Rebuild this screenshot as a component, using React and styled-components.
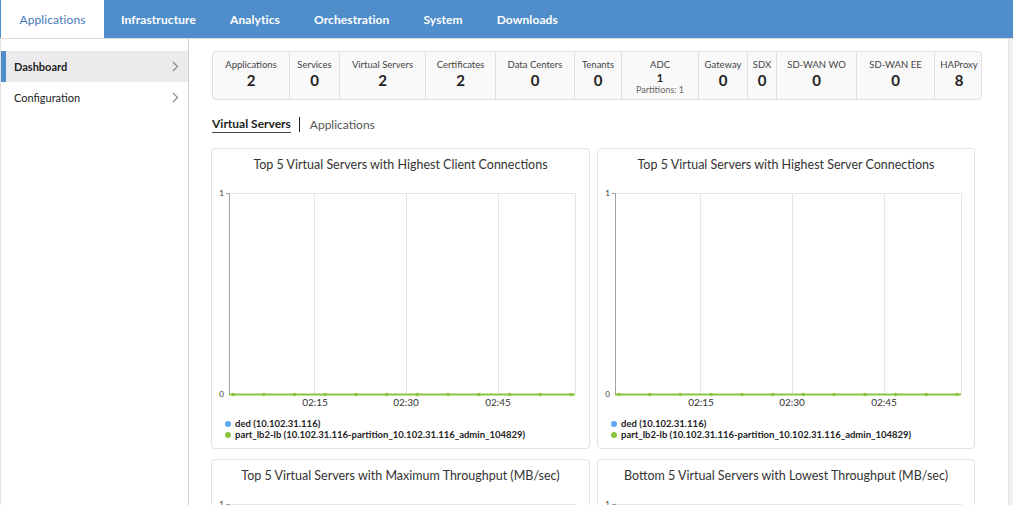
import React from "react";
import styled, { createGlobalStyle } from "styled-components";

const GlobalStyle = createGlobalStyle`
  html, body {
    margin: 0;
    padding: 0;
    overflow: hidden;
    background: #fff;
    font-family: Lato, "Open Sans", Arial, sans-serif;
    color: #333;
  }
`;

const Page = styled.div`
  width: 1013px;
  height: 505px;
  display: flex;
  flex-direction: column;
  overflow: hidden;
`;

const TopNav = styled.nav`
  display: flex;
  height: 38px;
  background: #4f8dcb;
  border-bottom: 1px solid #dcdcdc;
  flex-shrink: 0;
`;

const NavTab = styled.div`
  display: flex;
  align-items: center;
  padding: 0 17px;
  font-size: 12px;
  font-weight: ${(p) => (p.$active ? 400 : 700)};
  color: ${(p) => (p.$active ? "#4479b9" : "#fff")};
  background: ${(p) => (p.$active ? "#fff" : "transparent")};
  border-left: ${(p) => (p.$active ? "1px solid #4f8dcb" : "none")};
  width: ${(p) => (p.$active ? "104px" : "auto")};
  box-sizing: border-box;
  justify-content: center;
  letter-spacing: 0.1px;
`;

const Body = styled.div`
  flex: 1;
  display: flex;
  min-height: 0;
  border-left: 1px solid #e2e2e2;
`;

const Sidebar = styled.aside`
  width: 187px;
  flex-shrink: 0;
  border-right: 1px solid #cfcfcf;
  padding-top: 12px;
`;

const SideItem = styled.div`
  display: flex;
  align-items: center;
  justify-content: space-between;
  height: 31px;
  padding: 0 9px 0 ${(p) => (p.$active ? "8px" : "13px")};
  font-size: 11px;
  font-weight: ${(p) => (p.$active ? 700 : 400)};
  color: #222;
  background: ${(p) => (p.$active ? "#ebebed" : "transparent")};
  border-left: ${(p) => (p.$active ? "5px solid #4f8dcb" : "none")};
`;

const Chevron = () => (
  <svg width="7" height="11" viewBox="0 0 7 11">
    <path d="M1 1l4.5 4.5L1 10" fill="none" stroke="#888" strokeWidth="1.2" />
  </svg>
);

const Main = styled.main`
  flex: 1;
  padding: 12px 26px 0 23px;
  overflow: hidden;
`;

const ScrollTrack = styled.div`
  width: 4px;
  flex-shrink: 0;
  background: #f0f0f0;
  border-left: 1px solid #e4e4e4;
`;

const StatsBar = styled.div`
  display: grid;
  grid-template-columns: 76px 50px 86px 70px 79px 47px 77px 49px 29px 80px 78px 49px;
  height: 49px;
  box-sizing: border-box;
  background: #f9f9f9;
  border: 1px solid #e0e0e0;
  border-radius: 4px;
`;

const StatCell = styled.div`
  display: flex;
  flex-direction: column;
  align-items: center;
  padding-top: 7px;
  border-left: ${(p) => (p.$first ? "none" : "1px solid #e0e0e0")};
  white-space: nowrap;
`;

const StatLabel = styled.div`
  font-size: 9.5px;
  color: #444;
  line-height: 12px;
`;

const StatValue = styled.div`
  font-size: ${(p) => (p.$small ? "11px" : "15px")};
  font-weight: 700;
  color: #222;
  line-height: ${(p) => (p.$small ? "13px" : "19px")};
`;

const StatSub = styled.div`
  font-size: 9px;
  color: #666;
  line-height: 11px;
`;

const SubTabs = styled.div`
  display: flex;
  align-items: center;
  margin-top: 17px;
  height: 15px;
  font-size: 12px;
`;

const SubTab = styled.div`
  color: ${(p) => (p.$active ? "#222" : "#555")};
  font-weight: ${(p) => (p.$active ? 700 : 400)};
  border-bottom: ${(p) => (p.$active ? "1px solid #444" : "none")};
  padding-bottom: 1px;
`;

const TabDivider = styled.div`
  width: 1px;
  height: 15px;
  background: #222;
  margin: 0 10px 0 8px;
`;

const CardGrid = styled.div`
  display: grid;
  grid-template-columns: 379px 378px;
  column-gap: 7px;
  row-gap: 10px;
  margin-top: 16px;
  margin-left: -1px;
`;

const Card = styled.div`
  border: 1px solid #e0e0e0;
  border-radius: 4px;
  background: #fff;
  padding-bottom: 8px;
`;

const CardTitle = styled.div`
  text-align: center;
  font-size: 12.5px;
  color: #333;
  padding-top: 8px;
  height: 20px;
`;

const ChartBox = styled.div`
  margin-top: 8px;
`;

const Legend = styled.div`
  display: flex;
  flex-direction: column;
  padding-left: 13px;
  margin-top: 3px;
`;

const LegendRow = styled.div`
  display: flex;
  align-items: center;
  font-size: 9.5px;
  font-weight: 700;
  color: #222;
  line-height: 11px;
`;

const Dot = styled.span`
  width: 6px;
  height: 6px;
  border-radius: 50%;
  background: ${(p) => p.$color};
  margin-right: 4px;
`;

const stats = [
  ["Applications", "2"],
  ["Services", "0"],
  ["Virtual Servers", "2"],
  ["Certificates", "2"],
  ["Data Centers", "0"],
  ["Tenants", "0"],
  ["ADC", "1", "Partitions: 1"],
  ["Gateway", "0"],
  ["SDX", "0"],
  ["SD-WAN WO", "0"],
  ["SD-WAN EE", "0"],
  ["HAProxy", "8"],
];

function Chart() {
  const dots = Array.from({ length: 12 }, (_, i) => 21 + i * 30.73);
  return (
    <svg width="377" height="230" viewBox="0 0 377 230" style={{ display: "block" }}>
      <line x1="17" y1="8.5" x2="363" y2="8.5" stroke="#e6e6e6" />
      {[102, 194, 286, 363].map((x) => (
        <line key={x} x1={x + 0.5} y1="8" x2={x + 0.5} y2="209" stroke="#e6e6e6" />
      ))}
      <line x1="17.5" y1="8" x2="17.5" y2="210" stroke="#a0a0a0" />
      <line x1="14" y1="8.5" x2="17" y2="8.5" stroke="#a0a0a0" />
      <text x="12" y="11" fontSize="8" fill="#333" textAnchor="end" fontFamily="Lato, sans-serif">1</text>
      <text x="12" y="212" fontSize="8" fill="#333" textAnchor="end" fontFamily="Lato, sans-serif">0</text>
      <line x1="17" y1="209.5" x2="363" y2="209.5" stroke="#8bc441" strokeWidth="2" />
      {dots.map((x) => (
        <circle key={x} cx={x} cy="209.5" r="1.8" fill="#8bc441" />
      ))}
      {[["02:15", 103], ["02:30", 194], ["02:45", 286]].map(([t, x]) => (
        <text key={t} x={x} y="221" fontSize="10" fill="#333" textAnchor="middle" fontFamily="Lato, sans-serif">
          {t}
        </text>
      ))}
    </svg>
  );
}

function ChartCard({ title }) {
  return (
    <Card>
      <CardTitle>{title}</CardTitle>
      <ChartBox>
        <Chart />
      </ChartBox>
      <Legend>
        <LegendRow>
          <Dot $color="#5aa8f0" />
          ded (10.102.31.116)
        </LegendRow>
        <LegendRow>
          <Dot $color="#8bc441" />
          part_lb2-lb (10.102.31.116-partition_10.102.31.116_admin_104829)
        </LegendRow>
      </Legend>
    </Card>
  );
}

export default function App() {
  return (
    <Page>
      <GlobalStyle />
      <TopNav>
        <NavTab $active>Applications</NavTab>
        <NavTab>Infrastructure</NavTab>
        <NavTab>Analytics</NavTab>
        <NavTab>Orchestration</NavTab>
        <NavTab>System</NavTab>
        <NavTab>Downloads</NavTab>
      </TopNav>
      <Body>
        <Sidebar>
          <SideItem $active>
            Dashboard
            <Chevron />
          </SideItem>
          <SideItem>
            Configuration
            <Chevron />
          </SideItem>
        </Sidebar>
        <Main>
          <StatsBar>
            {stats.map(([label, value, sub], i) => (
              <StatCell key={label} $first={i === 0}>
                <StatLabel>{label}</StatLabel>
                <StatValue $small={!!sub}>{value}</StatValue>
                {sub && <StatSub>{sub}</StatSub>}
              </StatCell>
            ))}
          </StatsBar>
          <SubTabs>
            <SubTab $active>Virtual Servers</SubTab>
            <TabDivider />
            <SubTab>Applications</SubTab>
          </SubTabs>
          <CardGrid>
            <ChartCard title="Top 5 Virtual Servers with Highest Client Connections" />
            <ChartCard title="Top 5 Virtual Servers with Highest Server Connections" />
            <ChartCard title="Top 5 Virtual Servers with Maximum Throughput (MB/sec)" />
            <ChartCard title="Bottom 5 Virtual Servers with Lowest Throughput (MB/sec)" />
          </CardGrid>
        </Main>
        <ScrollTrack />
      </Body>
    </Page>
  );
}
